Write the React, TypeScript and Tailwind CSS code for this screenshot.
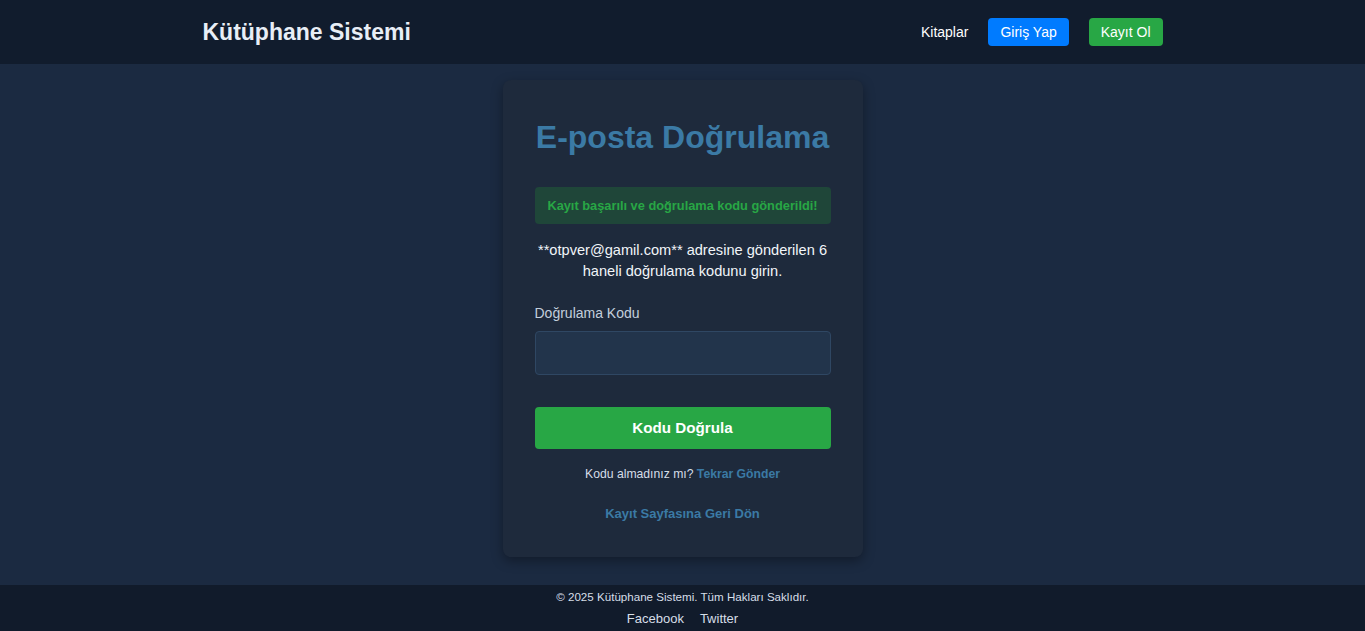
export default function App() {
  return (
    <div
      className="min-h-screen flex flex-col bg-[#1b2a41] text-white"
      style={{ fontFamily: '"Liberation Sans", Arial, sans-serif' }}
    >
      <header className="bg-[#111c2d] h-16">
        <div className="max-w-[960px] mx-auto h-full flex items-center justify-between">
          <span className="text-[23px] font-bold text-[#e8eef6]">Kütüphane Sistemi</span>
          <nav className="flex items-center">
            <a className="text-[14px] text-white">Kitaplar</a>
            <a className="ml-5 bg-[#007bff] text-white text-[14px] rounded h-7 px-3 flex items-center">
              Giriş Yap
            </a>
            <a className="ml-5 bg-[#28a745] text-white text-[14px] rounded h-7 px-3 flex items-center">
              Kayıt Ol
            </a>
          </nav>
        </div>
      </header>

      <main className="flex-1 flex justify-center pt-4 pb-7">
        <div className="w-[360px] bg-[#1e2a3c] rounded-lg shadow-[0_4px_12px_rgba(0,0,0,0.35)] px-8 pt-[38px] pb-[27px] text-center">
          <h1 className="text-[32px] font-bold text-[#3b7aa5] leading-[38px]">E-posta Doğrulama</h1>

          <div className="mt-[31px] bg-[#1f4639] rounded text-[#28a745] text-[12.8px] font-bold h-[37px] flex items-center justify-center">
            Kayıt başarılı ve doğrulama kodu gönderildi!
          </div>

          <p className="mt-[16px] text-[14.6px] leading-[21px] text-[#f1f5f9]">
            **otpver@gamil.com** adresine gönderilen 6 haneli doğrulama kodunu girin.
          </p>

          <div className="mt-[21px] text-left">
            <label className="block text-[14px] text-[#c3cfdc] leading-[20px]">Doğrulama Kodu</label>
            <input
              className="mt-2 w-full h-[44px] bg-[#22344b] border border-[#2f4763] rounded px-3 text-white outline-none"
              type="text"
            />
          </div>

          <button className="mt-8 w-full h-[42px] bg-[#28a745] rounded text-white text-[15.2px] font-bold">
            Kodu Doğrula
          </button>

          <p className="mt-[17px] text-[12.2px] text-[#d6dee8] leading-[16px]">
            Kodu almadınız mı? <a className="text-[#3b7aa5] font-bold">Tekrar Gönder</a>
          </p>

          <p className="mt-6 text-[13px] font-bold text-[#3b7aa5] leading-[16px]">Kayıt Sayfasına Geri Dön</p>
        </div>
      </main>

      <footer className="bg-[#111b2b] h-[46px] flex flex-col items-center pt-[4px]">
        <p className="text-[11.6px] text-[#d6dee8] leading-[16px]">© 2025 Kütüphane Sistemi. Tüm Hakları Saklıdır.</p>
        <div className="mt-[6px] flex gap-4 text-[13px] text-[#d6dee8] leading-[16px]">
          <a>Facebook</a>
          <a>Twitter</a>
        </div>
      </footer>
    </div>
  );
}
